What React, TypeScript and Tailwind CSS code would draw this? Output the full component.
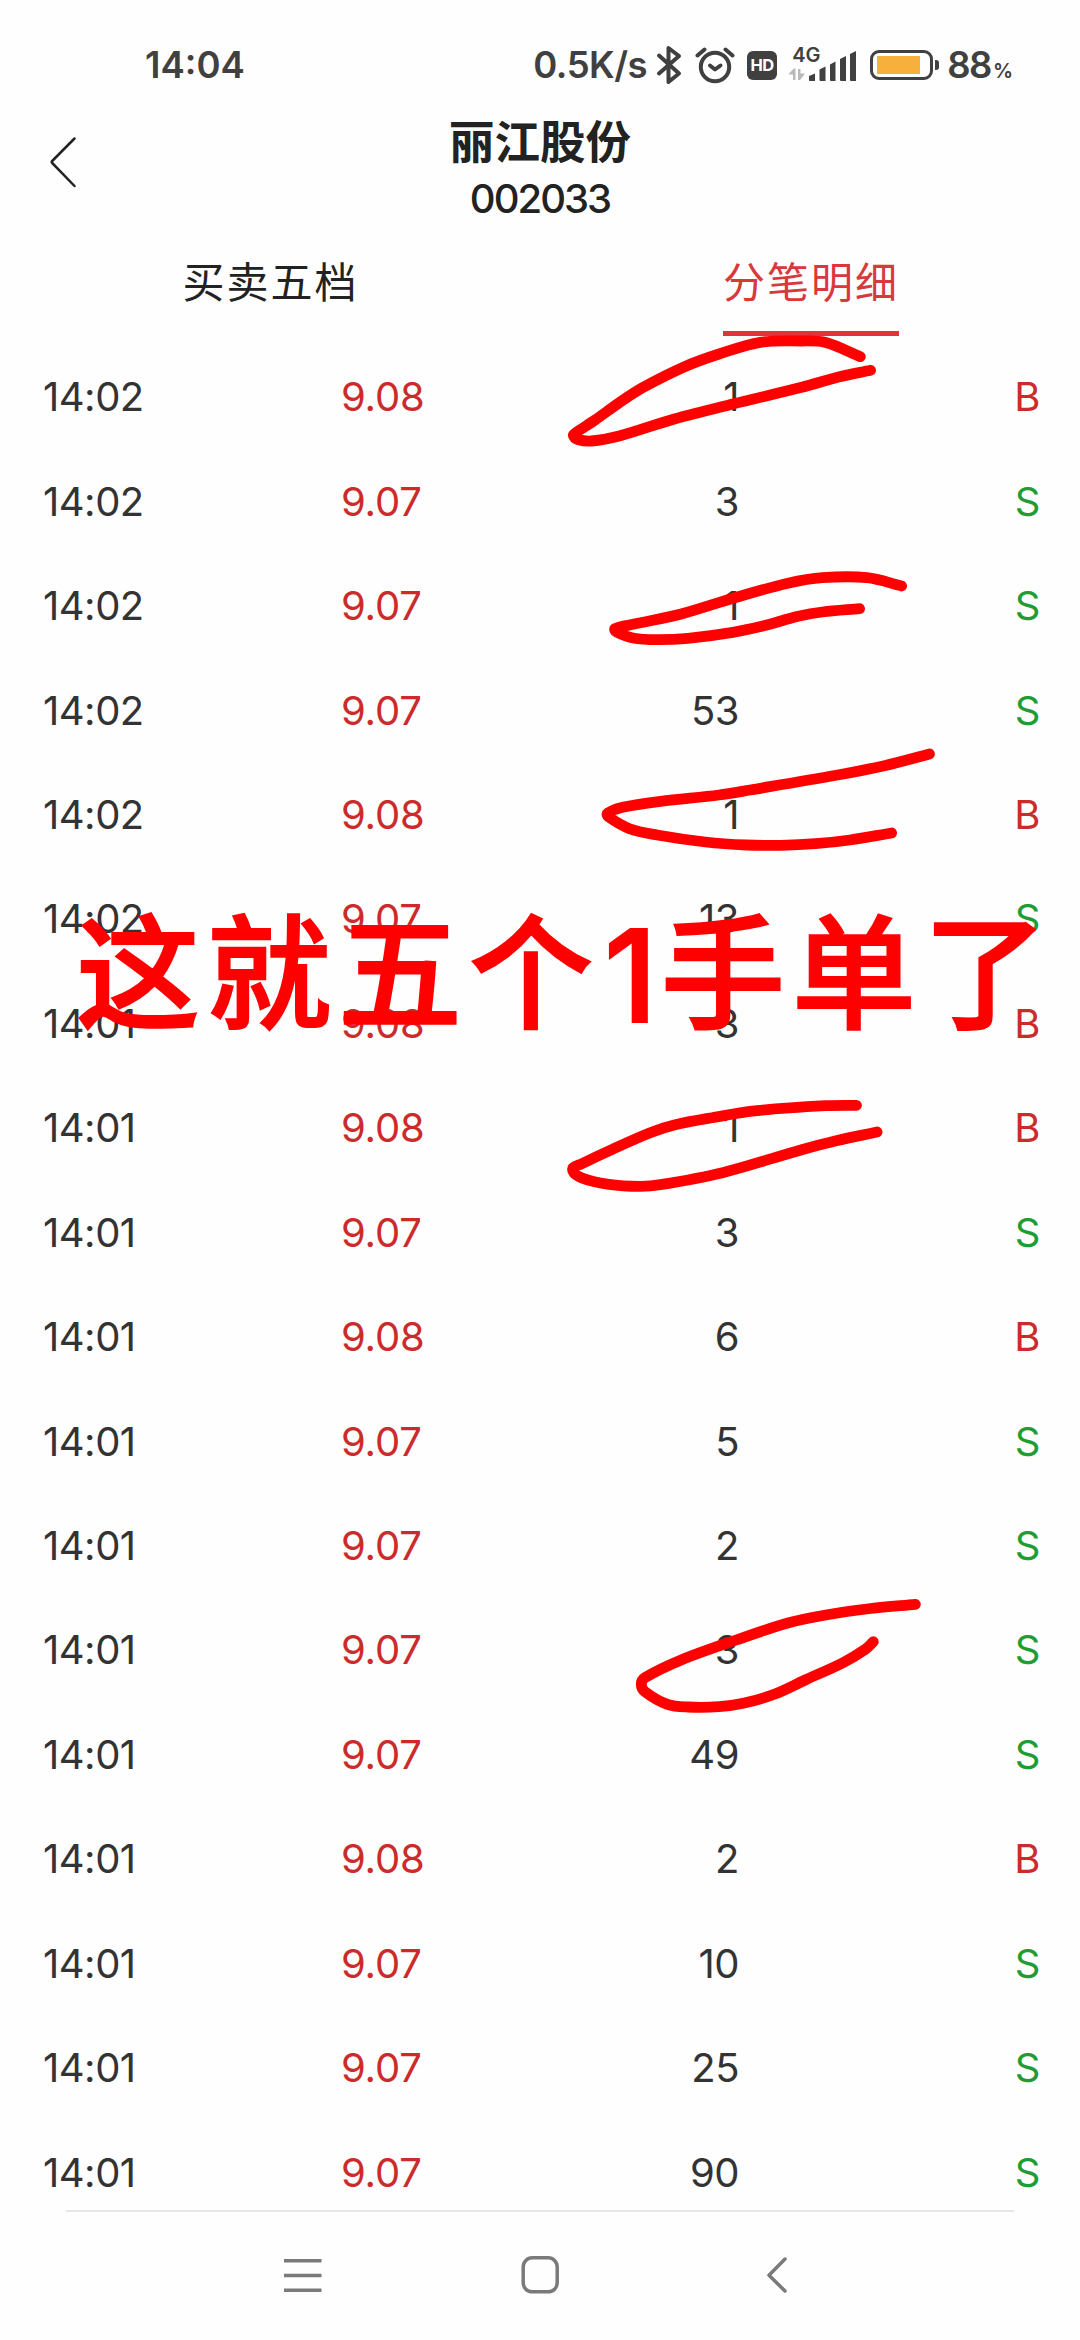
type Trade = {
    time: string
    price: string
    volume: number
    side: 'B' | 'S'
}

type Point = [number, number]

const trades: Trade[] = [
    {time: '14:02', price: '9.08', volume: 1, side: 'B'},
    {time: '14:02', price: '9.07', volume: 3, side: 'S'},
    {time: '14:02', price: '9.07', volume: 1, side: 'S'},
    {time: '14:02', price: '9.07', volume: 53, side: 'S'},
    {time: '14:02', price: '9.08', volume: 1, side: 'B'},
    {time: '14:02', price: '9.07', volume: 13, side: 'S'},
    {time: '14:01', price: '9.08', volume: 3, side: 'B'},
    {time: '14:01', price: '9.08', volume: 1, side: 'B'},
    {time: '14:01', price: '9.07', volume: 3, side: 'S'},
    {time: '14:01', price: '9.08', volume: 6, side: 'B'},
    {time: '14:01', price: '9.07', volume: 5, side: 'S'},
    {time: '14:01', price: '9.07', volume: 2, side: 'S'},
    {time: '14:01', price: '9.07', volume: 3, side: 'S'},
    {time: '14:01', price: '9.07', volume: 49, side: 'S'},
    {time: '14:01', price: '9.08', volume: 2, side: 'B'},
    {time: '14:01', price: '9.07', volume: 10, side: 'S'},
    {time: '14:01', price: '9.07', volume: 25, side: 'S'},
    {time: '14:01', price: '9.07', volume: 90, side: 'S'},
]

// hand drawn loops around the volume column
const loops: Point[][] = [
    [[860.3, 356.7], [825.8, 342.5], [801.7, 341], [760.4, 342.3], [719.1, 354], [684.6, 366.7], [643.3, 387.3], [619.2, 402.7], [595.1, 420], [576.2, 432.5], [573.4, 435.5], [577.9, 439.5], [591.7, 441], [619.2, 436], [674.3, 419], [732.8, 404], [801.7, 387.3], [839.6, 376.7], [870.6, 370.3]],
    [[901.6, 586], [867.1, 577.7], [822.4, 577.7], [787.9, 583.3], [736.3, 597.3], [681.2, 614], [633, 624.3], [615, 628.7], [616.5, 632], [633, 638], [657.1, 639.7], [688, 638.3], [732.8, 632.3], [763.8, 625.7], [798.3, 616.3], [822.4, 612], [859.6, 608.7]],
    [[929.5, 754], [884.4, 765.7], [836.2, 775.3], [750, 790], [719, 795], [660.5, 801.3], [622.6, 807.3], [607.5, 813.3], [608.2, 816.7], [629.5, 828.7], [657.1, 835], [705.3, 842], [746.6, 845], [781, 845.3], [815.5, 843.7], [849.9, 840], [891.6, 833]],
    [[856.5, 1105.3], [825.8, 1105.7], [756.9, 1110.7], [712.2, 1117.7], [674.3, 1125], [650.2, 1132.7], [612.3, 1149.3], [581.3, 1164], [572.5, 1169.3], [581.3, 1177.7], [608.9, 1184.3], [639.9, 1186.3], [660.5, 1184.7], [722.5, 1172.7], [801.7, 1149.7], [836.2, 1140.7], [877.1, 1132]],
    [[915.4, 1604.3], [870.6, 1608.5], [825.8, 1615], [787.9, 1623], [736.3, 1640], [681.2, 1660], [645, 1677.7], [641.3, 1684.3], [645, 1691.7], [667.4, 1704.3], [688, 1707], [719, 1706.7], [743.2, 1703.3], [774.2, 1694.3], [805.2, 1680], [843, 1662.7], [865.4, 1649.3], [873.3, 1641.7]],
]

function smoothPath(points: Point[]) {
    let d = `M${points[0][0]} ${points[0][1]}`
    for (let i = 0; i < points.length - 1; i++) {
        const p0 = points[i - 1] || points[i]
        const p1 = points[i]
        const p2 = points[i + 1]
        const p3 = points[i + 2] || p2
        // keep the handles short where two points sit close together
        const len = Math.hypot(p2[0] - p1[0], p2[1] - p1[1]) / 3
        const l1 = Math.hypot(p2[0] - p0[0], p2[1] - p0[1]) || 1
        const l2 = Math.hypot(p3[0] - p1[0], p3[1] - p1[1]) || 1
        const c1 = [p1[0] + (p2[0] - p0[0]) / l1 * len, p1[1] + (p2[1] - p0[1]) / l1 * len]
        const c2 = [p2[0] - (p3[0] - p1[0]) / l2 * len, p2[1] - (p3[1] - p1[1]) / l2 * len]
        d += ` C${c1[0]} ${c1[1]} ${c2[0]} ${c2[1]} ${p2[0]} ${p2[1]}`
    }
    return d
}

function StatusBar() {
    return (
        <div className="h-[104px] pt-[40px] pl-[145px] pr-[68px] flex items-start justify-between text-[36.5px] leading-[50px] font-semibold text-[#404040]">
            <span>14:04</span>
            <div className="flex items-center h-[50px]">
                <span className="tracking-[-0.5px]">0.5K/s</span>
                <svg className="ml-[8px] w-[28px] h-[42px]" viewBox="0 0 28 42" fill="none" stroke="#404040" strokeWidth="4" strokeLinejoin="round" strokeLinecap="round">
                    <path d="M4 11.5L24 29.5L13.5 38V4L24 12L4 29.5"/>
                </svg>
                <svg className="ml-[12px] w-[40px] h-[40px]" viewBox="0 0 40 40" fill="none" stroke="#404040" strokeWidth="4" strokeLinecap="round" strokeLinejoin="round">
                    <circle cx="20" cy="22" r="14.2"/>
                    <path d="M15 20.5L20 24.5L25.500 20.500"/>
                    <path d="M2.500 10.500L9.500 4.500M37.500 10.500L30.500 4.500"/>
                </svg>
                <span className="ml-[12px] w-[30px] h-[29px] rounded-[6px] bg-[#404040] text-white text-[16.5px] leading-[29px] tracking-[-0.5px] text-center font-bold">HD</span>
                <div className="ml-[12px] w-[67px] h-[34px] relative">
                    <svg className="w-[67px] h-[34px]" viewBox="0 0 67 34" fill="#404040">
                        <path d="M20 28L26 25.500V33H21Q20 33 20 32Z"/>
                        <path d="M30.500 21.500L36.500 18.500V33H31.500Q30.500 33 30.500 32Z"/>
                        <path d="M41 16.500L46.500 13.500V33H42Q41 33 41 32Z"/>
                        <path d="M51 11L57 8V33H52Q51 33 51 32Z"/>
                        <path d="M61 6L67 3V33H62Q61 33 61 32Z"/>
                        <path d="M0 25.500L5 20.500H6.500V32H4V26.500H0ZM9 21H11.500V25.500H16L11 32H9Z" fill="#bababa"/>
                    </svg>
                    <span className="absolute left-[3px] top-[-6px] text-[20px] leading-[26px]">4G</span>
                </div>
                <div className="ml-[14px] w-[63px] h-[30px] rounded-[9px] border-[3px] border-[#404040] p-[3px] flex items-center">
                    <div className="ml-px w-[43px] h-[18px] bg-[#f6b03b]"></div>
                </div>
                <div className="ml-[2px] w-[4px] h-[10px] rounded-r-[3px] bg-[#404040]"></div>
                <span className="ml-[8px] tracking-[-1.5px]">88</span>
                <span className="ml-[2px] mt-[11px] text-[20px] tracking-[-1px]">%</span>
            </div>
        </div>
    )
}

function Header() {
    return (
        <div className="h-[126px] grid grid-cols-[1fr_auto_1fr] text-[#222]">
            <svg className="ml-[49px] mt-[31px] w-[30px] h-[54px]" viewBox="0 0 30 54" fill="none" stroke="#222" strokeWidth="2.5" strokeLinecap="round" strokeLinejoin="round">
                <path d="M25.500 3.500L3.200 26Q2.200 27 3.200 28L25.500 51"/>
            </svg>
            <div className="flex flex-col items-center">
                <h1 className="mt-[11px] text-[45.5px] leading-[56px] font-bold">丽江股份</h1>
                <div className="mt-[3px] text-[40px] leading-[50px] font-medium tracking-[-2px]">002033</div>
            </div>
        </div>
    )
}

function Tabs() {
    return (
        <div className="h-[115px] shrink-0 grid grid-cols-2 justify-items-center items-start text-[42px] tracking-[2px] leading-[60px] text-[#222]">
            <div className="pt-[23px] pl-px">买卖五档</div>
            <div className="ml-[2px] pt-[23px] h-[106px] border-b-[5px] border-[#dd3539] text-[#d8393b]">分笔明细</div>
        </div>
    )
}

function TradeRow({trade}: {trade: Trade}) {
    return (
        <div className="h-[104.45px] shrink-0 pl-[43px] pr-[40px] flex items-center text-[40px] tracking-[-0.5px] text-[#333]">
            <span className="w-[298px]">{trade.time}</span>
            <span className="w-[200px] text-[#cc2b2b] tracking-[-0.2px]">{trade.price}</span>
            <span className="w-[198px] text-right">{trade.volume}</span>
            <span className={`flex-1 text-right ${trade.side === 'B' ? 'text-[#cc2b2b]' : 'text-[#1f9c33]'}`}>{trade.side}</span>
        </div>
    )
}

function NavBar() {
    return (
        <div className="h-[130px] shrink-0 mx-[66px] border-t-2 border-[#e6e6e6] flex justify-between pl-[216px] pr-[214px] pt-[43px]">
            <svg className="w-[40px] h-[40px]" viewBox="0 0 40 40" stroke="#7a7a7a" strokeWidth="3.5">
                <path d="M2 5.700H39.500M2 20.500H39.500M2 35.300H39.500"/>
            </svg>
            <svg className="w-[40px] h-[40px]" viewBox="0 0 40 40" fill="none" stroke="#7a7a7a" strokeWidth="3.5">
                <rect x="2.200" y="2.800" width="34" height="34" rx="9"/>
            </svg>
            <svg className="w-[40px] h-[40px]" viewBox="0 0 40 40" fill="none" stroke="#7a7a7a" strokeWidth="3.5" strokeLinejoin="round" strokeLinecap="round">
                <path d="M25 4L9 20.200L25 36"/>
            </svg>
        </div>
    )
}

function App() {
    return (
        <div className="relative w-[1080px] h-[2340px] overflow-hidden bg-[#fefefe] flex flex-col font-['Inter','Noto_Sans_CJK_SC',sans-serif]">
            <StatusBar/>
            <Header/>
            <Tabs/>
            <div className="flex-1 min-h-0 overflow-hidden flex flex-col">
                {trades.map((trade, i) => <TradeRow key={i} trade={trade}/>)}
            </div>
            <NavBar/>

            <svg className="absolute inset-0 w-full h-full" viewBox="0 0 1080 2340" fill="none" stroke="#ff0000" strokeWidth="10.8" strokeLinecap="round" strokeLinejoin="round">
                {loops.map((points, i) => <path key={i} d={smoothPath(points)}/>)}
            </svg>
            <div className="absolute left-[76px] top-[879px] flex whitespace-nowrap text-[124px] leading-[190px] tracking-[7px] font-medium text-[#ff0000] [-webkit-text-stroke:2px_#ff0000]">
                <span>这就五个</span>
                <span className="w-[61px] pt-[2px] flex justify-center text-[128px] tracking-normal">1</span>
                <span>手单了</span>
            </div>
        </div>
    )
}

export default App
